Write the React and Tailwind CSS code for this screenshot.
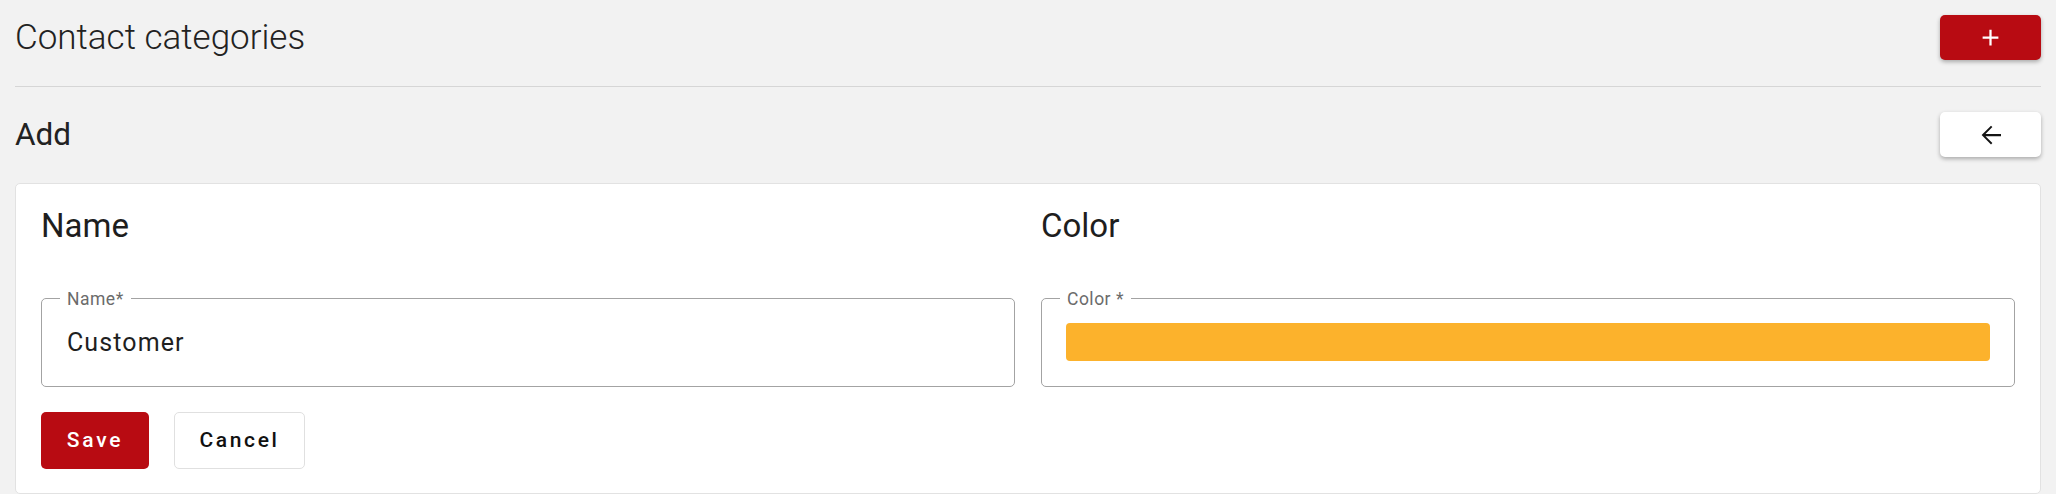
import React from 'react'

const font = { fontFamily: 'Roboto, "Noto Sans", sans-serif' }

function PlusIcon() {
  return (
    <svg viewBox="0 0 24 24" className="h-[27px] w-[27px] fill-white">
      <path d="M19 13h-6v6h-2v-6H5v-2h6V5h2v6h6v2z" />
    </svg>
  )
}

function BackIcon() {
  return (
    <svg viewBox="0 0 24 24" className="h-[30px] w-[30px] fill-[#141414]">
      <path d="M20 11.15H7.6l5.5-5.5L12 4.5 4.5 12l7.5 7.5 1.1-1.1-5.5-5.5H20z" />
    </svg>
  )
}

function OutlinedField({ label, children }) {
  return (
    <div className="relative h-[89px] rounded-[5px] border border-[#a3a3a3]">
      <span className="absolute -top-[12px] left-[18px] bg-white px-[7px] text-[17.5px] leading-[24px] tracking-[0.5px] text-[#6b6b6b]">
        {label}
      </span>
      {children}
    </div>
  )
}

export default function App() {
  return (
    <div className="min-h-[494px] bg-[#f2f2f2] px-[15px] pt-[15px]" style={font}>
      <div className="flex items-center justify-between">
        <h1 className="text-[35px] font-light leading-[45px] text-[#222]">Contact categories</h1>
        <button
          type="button"
          className="flex h-[45px] w-[101px] items-center justify-center rounded-[5px] bg-[#b80b12] shadow-[0_2px_4px_rgba(0,0,0,0.3)]"
        >
          <PlusIcon />
        </button>
      </div>

      <div className="mt-[26px] h-px bg-[#d6d6d6]" />

      <div className="mt-[25px] flex items-center justify-between">
        <h2 className="text-[31.5px] font-normal leading-[45px] text-[#222]">Add</h2>
        <button
          type="button"
          className="flex h-[45px] w-[101px] items-center justify-center rounded-[5px] bg-white shadow-[0_2px_4px_rgba(0,0,0,0.3)]"
        >
          <BackIcon />
        </button>
      </div>

      <div className="mt-[26px] rounded-[5px] border border-[#e2e2e2] bg-white px-[25px] pt-[23px] pb-[24px]">
        <div className="grid grid-cols-2 gap-x-[26px]">
          <div>
            <h3 className="text-[33px] font-normal leading-[38px] text-[#1e1e1e]">Name</h3>
            <div className="mt-[53px]">
              <OutlinedField label="Name*">
                <div className="flex h-full items-center pl-[25px] text-[25px] tracking-[1.1px] text-[#1f1f1f]">
                  Customer
                </div>
              </OutlinedField>
            </div>
          </div>
          <div>
            <h3 className="text-[33px] font-normal leading-[38px] text-[#1e1e1e]">Color</h3>
            <div className="mt-[53px]">
              <OutlinedField label="Color *">
                <div className="px-[24px] pt-[24px]">
                  <div className="h-[38px] rounded-[4px] bg-[#fcb22c]" />
                </div>
              </OutlinedField>
            </div>
          </div>
        </div>

        <div className="mt-[25px] flex gap-[25px]">
          <button
            type="button"
            className="h-[57px] w-[108px] rounded-[5px] bg-[#b80b12] text-[21px] font-medium tracking-[2.8px] text-white"
          >
            Save
          </button>
          <button
            type="button"
            className="h-[57px] w-[131px] rounded-[5px] border border-[#e0e0e0] bg-white text-[21px] font-medium tracking-[2.6px] text-[#111]"
          >
            Cancel
          </button>
        </div>
      </div>
    </div>
  )
}
